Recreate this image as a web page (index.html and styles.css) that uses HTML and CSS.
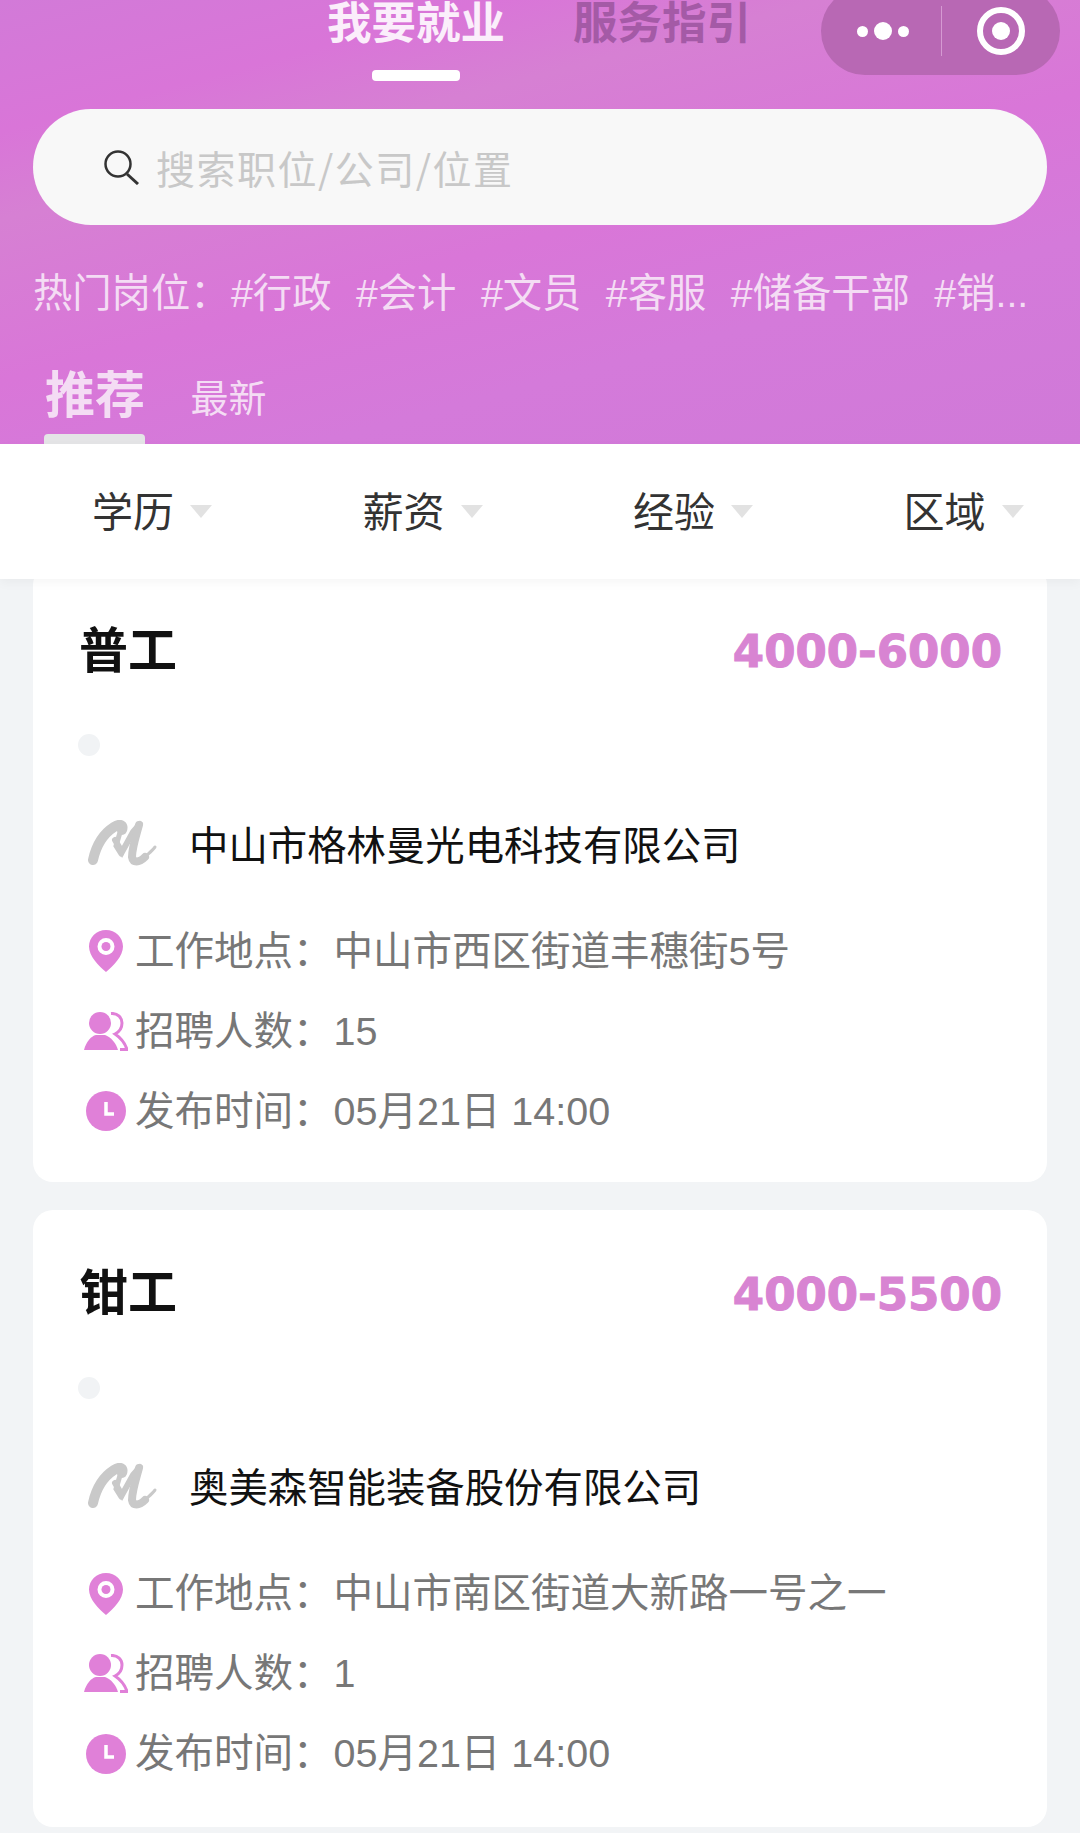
FILE: index.html
```html
<!DOCTYPE html>
<html lang="zh-CN">
<head>
<meta charset="UTF-8">
<meta name="viewport" content="width=device-width, initial-scale=1.0">
<title>我要就业</title>
<link rel="stylesheet" href="styles.css">
</head>
<body>
<svg class="sprite">
  <symbol id="logo" viewBox="8 10 70 48">
    <path d="M13 50C16 36 23 24 34 17C40 13 44 15 42 20" fill="none" stroke="#c9c9c9" stroke-width="10" stroke-linecap="round"/>
    <path d="M41 19L36 36L41 44" fill="none" stroke="#c9c9c9" stroke-width="5" stroke-linecap="round"/>
    <path d="M35 30L42 42L53 22L60 14" fill="none" stroke="#c9c9c9" stroke-width="6" stroke-linecap="round"/>
    <path d="M59 15C56 26 52 38 52 47C53 53 59 53 65 47" fill="none" stroke="#c9c9c9" stroke-width="8" stroke-linecap="round"/>
    <path d="M64 48C68 44 72 41 75 37" fill="none" stroke="#c9c9c9" stroke-width="3" stroke-linecap="round"/>
  </symbol>
  <symbol id="pin" viewBox="0 0 34 42">
    <path fill-rule="evenodd" fill="#e080d8" d="M17 0C7.6 0 0 7.4 0 16.5C0 26 9.500 36 17 42C24.500 36 34 26 34 16.500C34 7.400 26.400 0 17 0ZM17 8A8.500 8.500 0 1 1 17 25A8.500 8.500 0 1 1 17 8Z"/>
    <circle cx="17" cy="16.500" r="4.500" fill="#e080d8"/>
  </symbol>
  <symbol id="users" viewBox="0 0 44 39">
    <circle cx="16" cy="11" r="11" fill="#e080d8"/>
    <path d="M0 38C2 30 7 24 12 23H21C27 25 32 31 34 38Z" fill="#e080d8"/>
    <path d="M27 1.500C34 1 38 6 38 11C38 16 35 20 31 22C37 26 41 31 43 37.500H36" fill="none" stroke="#e080d8" stroke-width="3"/>
  </symbol>
  <symbol id="clock" viewBox="0 0 40 40">
    <circle cx="20" cy="20" r="20" fill="#e080d8"/>
    <path d="M20 11V23H28" fill="none" stroke="#fff" stroke-width="3.500"/>
  </symbol>
</svg>

<div class="page">
  <div class="header">
    <div class="top-tabs">
      <div class="top-tab active">我要就业<span class="top-line"></span></div>
      <div class="top-tab">服务指引</div>
    </div>
    <div class="capsule">
      <div class="capsule-dots"><i></i><b></b><i></i></div>
      <div class="capsule-line"></div>
      <div class="capsule-target"></div>
    </div>
    <div class="search">
      <svg class="search-icon" viewBox="0 0 36 36"><circle cx="15" cy="15" r="12.500" fill="none" stroke="#333" stroke-width="2.500"/><path d="M24 25L35 35" stroke="#333" stroke-width="3" fill="none"/></svg>
      <span class="search-text">搜索职位/公司/位置</span>
    </div>
    <div class="hot">
      <span class="hot-label">热门岗位：</span>
      <span>#行政</span>
      <span>#会计</span>
      <span>#文员</span>
      <span>#客服</span>
      <span>#储备干部</span>
      <span>#销...</span>
    </div>
    <div class="sort">
      <div class="sort-item active">推荐</div>
      <div class="sort-item">最新</div>
    </div>
  </div>

  <div class="filter">
    <div class="filter-item">学历<i class="arrow"></i></div>
    <div class="filter-item">薪资<i class="arrow"></i></div>
    <div class="filter-item">经验<i class="arrow"></i></div>
    <div class="filter-item">区域<i class="arrow"></i></div>
  </div>

  <div class="list">
    <div class="card">
      <div class="card-head">
        <div class="job">普工</div>
        <div class="salary">4000-6000</div>
      </div>
      <div class="dot"></div>
      <div class="company">
        <svg class="logo"><use href="#logo"/></svg>
        <span>中山市格林曼光电科技有限公司</span>
      </div>
      <div class="info">
        <div class="info-row"><span class="info-icon"><svg class="ic-pin"><use href="#pin"/></svg></span><span>工作地点：<span class="value">中山市西区街道丰穗街5号</span></span></div>
        <div class="info-row"><span class="info-icon"><svg class="ic-users"><use href="#users"/></svg></span><span>招聘人数：<span class="value">15</span></span></div>
        <div class="info-row"><span class="info-icon"><svg class="ic-clock"><use href="#clock"/></svg></span><span>发布时间：<span class="value">05月21日 14:00</span></span></div>
      </div>
    </div>

    <div class="card card-second">
      <div class="card-head">
        <div class="job">钳工</div>
        <div class="salary">4000-5500</div>
      </div>
      <div class="dot"></div>
      <div class="company">
        <svg class="logo"><use href="#logo"/></svg>
        <span>奥美森智能装备股份有限公司</span>
      </div>
      <div class="info">
        <div class="info-row"><span class="info-icon"><svg class="ic-pin"><use href="#pin"/></svg></span><span>工作地点：<span class="value">中山市南区街道大新路一号之一</span></span></div>
        <div class="info-row"><span class="info-icon"><svg class="ic-users"><use href="#users"/></svg></span><span>招聘人数：<span class="value">1</span></span></div>
        <div class="info-row"><span class="info-icon"><svg class="ic-clock"><use href="#clock"/></svg></span><span>发布时间：<span class="value">05月21日 14:00</span></span></div>
      </div>
    </div>
  </div>
</div>
</body>
</html>
```

FILE: styles.css
```css
html, body {
  margin: 0;
  padding: 0;
  background-color: #f2f4f6;
}

body {
  font-family: "Liberation Sans", "Noto Sans CJK SC", sans-serif;
}

.sprite {
  display: none;
}

.page {
  height: 1833px;
  overflow: hidden;
}

.header {
  position: relative;
  height: 444px;
  box-sizing: border-box;
  padding: 0 33px;
  background: linear-gradient(165deg, #d27ad8 0%, #d975d8 18%, #d680d3 30%, #d976d8 52%, #d47ada 72%, #d079d8 100%);
}

.top-tabs {
  display: flex;
  box-sizing: border-box;
  height: 109px;
  padding: 2px 0 0 294px;
  gap: 68px;
}

.top-tab {
  position: relative;
  font-size: 44.5px;
  line-height: 44px;
  font-weight: 700;
  color: #a45aa6;
}

.top-tab.active {
  color: #fbeefb;
}

.top-line {
  position: absolute;
  left: 45px;
  top: 68px;
  width: 88px;
  height: 11px;
  border-radius: 4px;
  background-color: #fff;
}

.capsule {
  position: absolute;
  top: -13px;
  left: 821px;
  width: 239px;
  height: 88px;
  display: flex;
  align-items: center;
  border-radius: 44px;
  background-color: #b868b4;
}

.capsule-dots {
  display: flex;
  align-items: center;
  gap: 6px;
  margin-left: 36px;
  width: 84px;
}

.capsule-dots i {
  width: 11px;
  height: 11px;
  border-radius: 50%;
  background-color: #fff;
}

.capsule-dots b {
  width: 18px;
  height: 18px;
  border-radius: 50%;
  background-color: #fff;
}

.capsule-line {
  width: 1px;
  height: 50px;
  background-color: #d59ad2;
}

.capsule-target {
  position: relative;
  box-sizing: border-box;
  width: 48px;
  height: 48px;
  margin-left: 35px;
  border: 6px solid #fff;
  border-radius: 50%;
}

.capsule-target::after {
  content: "";
  position: absolute;
  top: 9px;
  left: 9px;
  width: 18px;
  height: 18px;
  border-radius: 50%;
  background-color: #fff;
}

.search {
  display: flex;
  align-items: center;
  height: 116px;
  padding-left: 70px;
  border-radius: 58px;
  background-color: #f8f8f8;
}

.search-icon {
  width: 36px;
  height: 36px;
  margin-right: 17px;
}

.search-text {
  font-family: "Noto Sans CJK SC", sans-serif;
  font-size: 39px;
  line-height: 44px;
  letter-spacing: 1.500px;
  color: #c8c8c8;
}

.hot {
  display: flex;
  height: 44px;
  margin-top: 46px;
  font-size: 39.300px;
  line-height: 44px;
  color: #f4dcf4;
  white-space: nowrap;
  gap: 24.500px;
}

.hot-label {
  margin-right: -23px;
}

.sort {
  display: flex;
  align-items: center;
  height: 60px;
  margin-top: 51px;
  padding-left: 12px;
  gap: 45.500px;
}

.sort-item {
  font-size: 38px;
  line-height: 60px;
  color: #f4dcf4;
  margin-top: 5px;
}

.sort-item.active {
  position: relative;
  font-size: 50px;
  font-weight: 700;
  margin-top: 0;
}

.sort-item.active::after {
  content: "";
  position: absolute;
  left: -1px;
  top: 68px;
  width: 101px;
  height: 11px;
  border-radius: 4px 4px 0 0;
  background-color: #e4e4e6;
}

.filter {
  position: relative;
  z-index: 1;
  display: grid;
  grid-template-columns: repeat(4, 270.500px);
  align-items: center;
  box-sizing: border-box;
  height: 135px;
  padding: 0 0 5px 92px;
  background-color: #fff;
  box-shadow: 0 4px 10px rgba(0, 0, 0, 0.04);
}

.filter-item {
  display: flex;
  align-items: center;
  font-size: 41px;
  color: #333;
}

.arrow {
  width: 0;
  height: 0;
  margin: 4px 0 0 16px;
  border-left: 11px solid transparent;
  border-right: 11px solid transparent;
  border-top: 13px solid #e2e2e2;
}

.list {
  display: flex;
  flex-direction: column;
  gap: 28px;
  margin-top: -14px;
  padding: 0 33px;
}

.card {
  height: 617px;
  box-sizing: border-box;
  padding: 51px 47px 0 46px;
  border-radius: 20px;
  background-color: #fff;
}

.card-second {
  padding-top: 48.500px;
}

.card-head {
  display: flex;
  justify-content: space-between;
  align-items: center;
  height: 60px;
}

.job {
  font-size: 49px;
  font-weight: 700;
  color: #111;
}

.salary {
  margin: 11px -2px 0 0;
  font-family: "DejaVu Sans", sans-serif;
  font-size: 45px;
  font-weight: 700;
  color: #d884d2;
  -webkit-text-stroke: 1px #d884d2;
}

.dot {
  width: 22px;
  height: 22px;
  margin: 58px 0 0 -1px;
  border-radius: 50%;
  background-color: #f1f3f5;
}

.company {
  display: flex;
  align-items: center;
  height: 48px;
  margin-top: 62px;
  font-size: 39.400px;
  color: #111;
}

.logo {
  width: 70px;
  height: 48px;
  margin: 4px 31px 0 9px;
}

.info {
  display: flex;
  flex-direction: column;
  gap: 36px;
  margin-top: 59px;
}

.info-row {
  display: flex;
  align-items: center;
  height: 44px;
  font-size: 39.500px;
  color: #777;
}

.info-icon {
  display: flex;
  justify-content: center;
  width: 44px;
  margin: 8px 7px 0 5px;
}

.value {
  margin-left: 1px;
  color: #777;
}

.ic-pin {
  width: 34px;
  height: 42px;
}

.ic-users {
  width: 44px;
  height: 39px;
}

.ic-clock {
  width: 40px;
  height: 40px;
}
```
